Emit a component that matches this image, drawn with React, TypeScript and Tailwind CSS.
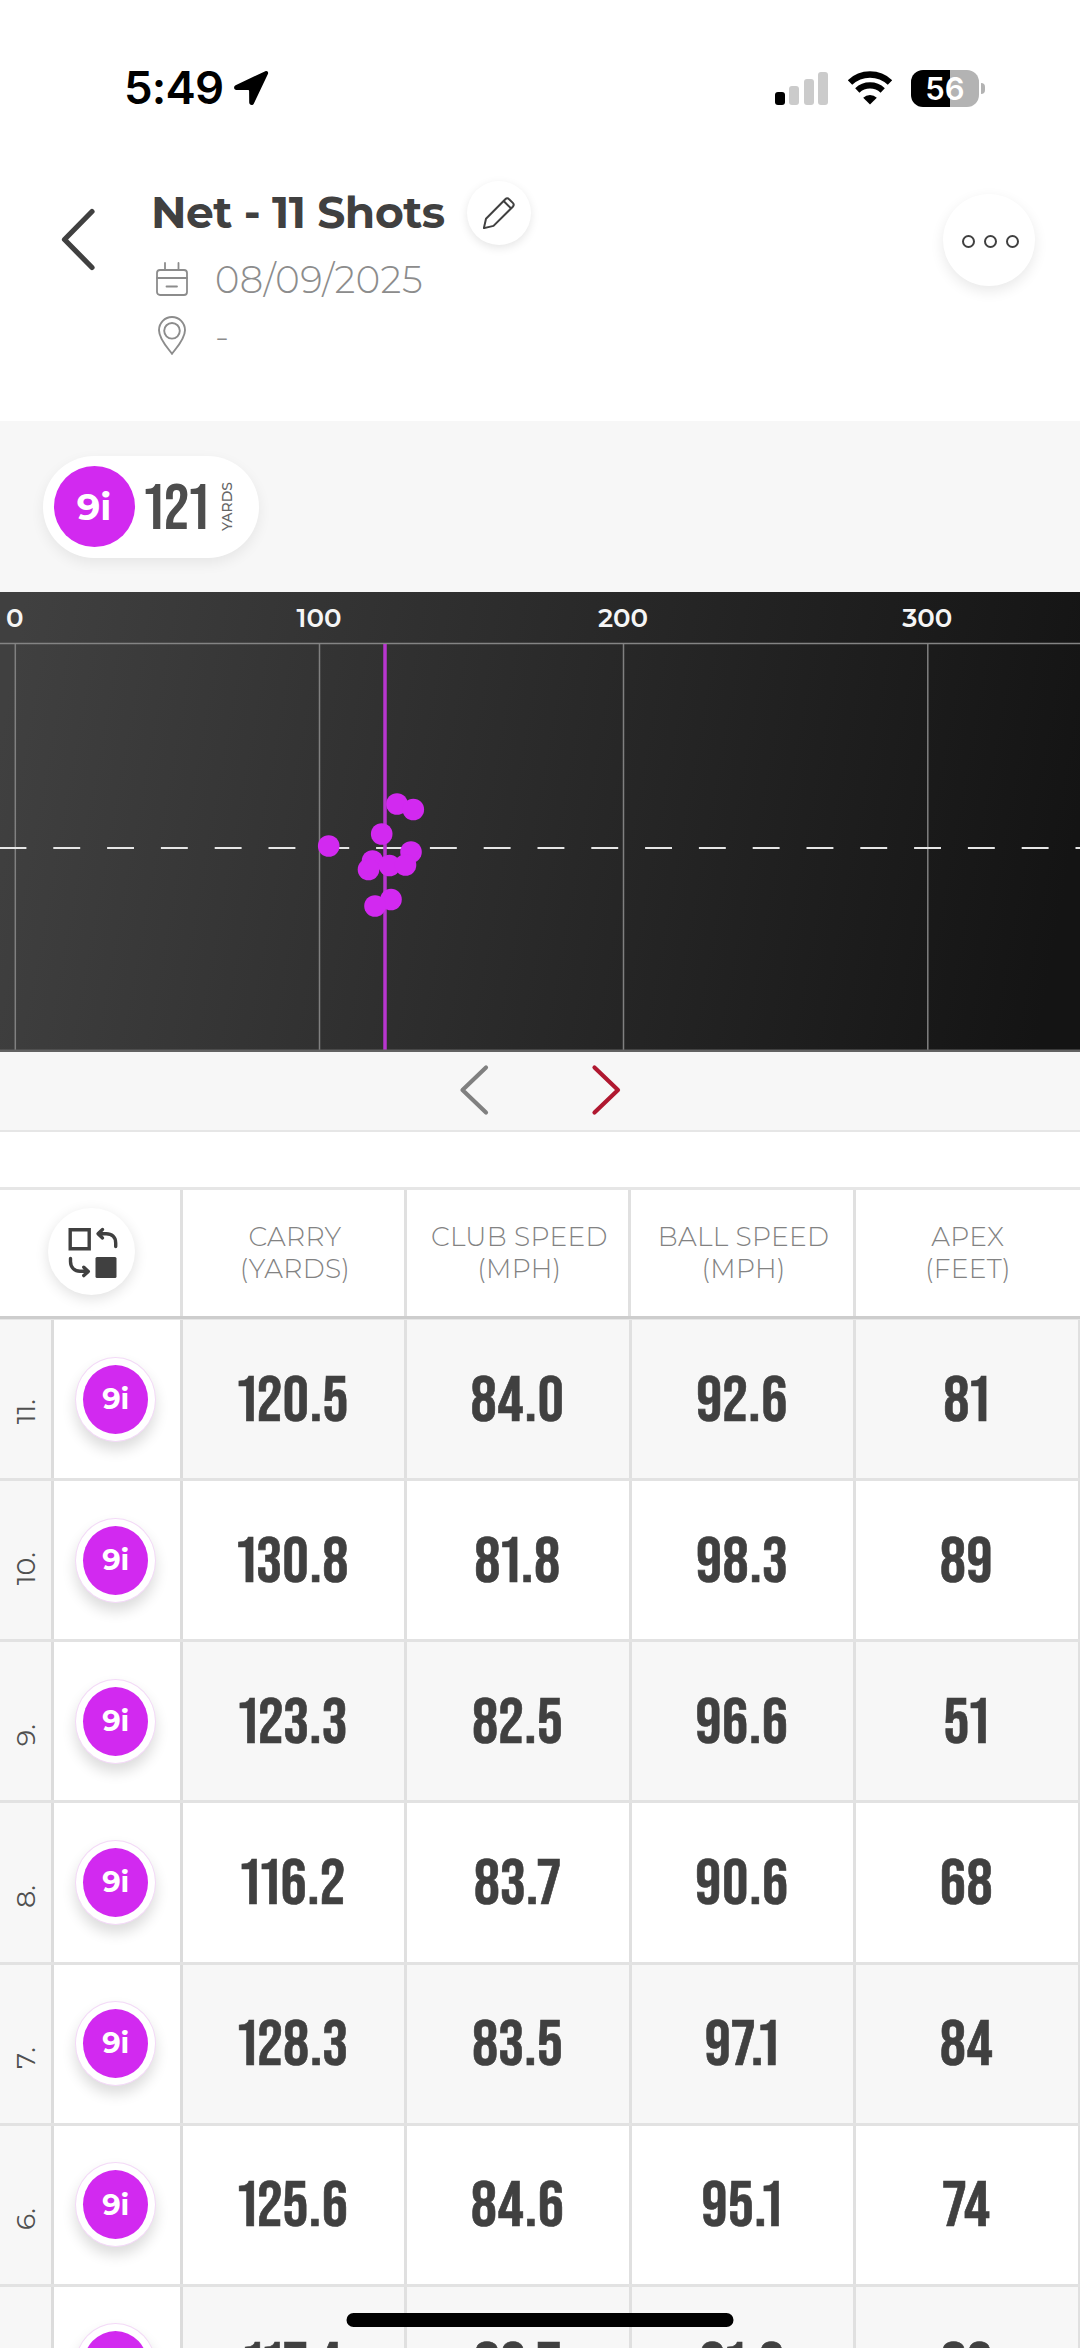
const PURPLE = "#d229f0";

type Shot = { n: number; values: string[] };

const columns = [
  ["CARRY", "(YARDS)"],
  ["CLUB SPEED", "(MPH)"],
  ["BALL SPEED", "(MPH)"],
  ["APEX", "(FEET)"],
];

const shots: Shot[] = [
  { n: 11, values: ["120.5", "84.0", "92.6", "81"] },
  { n: 10, values: ["130.8", "81.8", "98.3", "89"] },
  { n: 9, values: ["123.3", "82.5", "96.6", "51"] },
  { n: 8, values: ["116.2", "83.7", "90.6", "68"] },
  { n: 7, values: ["128.3", "83.5", "97.1", "84"] },
  { n: 6, values: ["125.6", "84.6", "95.1", "74"] },
  { n: 5, values: ["117.4", "82.7", "91.3", "83"] },
];

// Landing points, in chart pixels
const points = [
  [397, 212],
  [413.3, 217.5],
  [381.7, 242],
  [328.7, 254],
  [411, 260],
  [372.5, 269],
  [368.5, 277.5],
  [389.5, 273.5],
  [405.5, 273],
  [391, 307.5],
  [375, 314],
];

const gridLines = [
  [15.3, "0"],
  [319.5, "100"],
  [623.5, "200"],
  [927.8, "300"],
] as const;

function StatusBar() {
  return (
    <div className="flex h-[176px] shrink-0 items-center pl-[124px] pr-[95px] font-['Inter',sans-serif]">
      <span className="w-[99px] text-[45.5px] font-semibold leading-[48px] tracking-[-0.8px] text-black">5:49</span>
      <svg className="ml-[10px] h-9 w-9" viewBox="0 0 36 36" fill="#000">
        <path d="M32.3 1.200 2.600 15.300c-2.300 1.200-2 4.700.9 4.700l11.800.1c.5 0 .8.300.8.800l.1 11.600c0 2.800 3.600 3.400 4.700 1L34.900 4c.9-1.900-.700-3.700-2.600-2.800z" />
      </svg>
      <div className="ml-auto flex items-end gap-[4.500px]">
        <span className="h-[13px] w-[10px] rounded-[3px] bg-black" />
        <span className="h-[19px] w-[10px] rounded-[3px] bg-[#cbcbcb]" />
        <span className="h-[26px] w-[10px] rounded-[3px] bg-[#cbcbcb]" />
        <span className="h-[33px] w-[10px] rounded-[3px] bg-[#cbcbcb]" />
      </div>
      <svg className="ml-[19px] h-[34px] w-[46px]" viewBox="0 0 46 34">
        <path d="M3 11.500a29 29 0 0 1 40 0" fill="none" stroke="#000" strokeWidth="6.400" />
        <path d="M10.300 19.500a18.500 18.500 0 0 1 25.400 0" fill="none" stroke="#000" strokeWidth="6.200" />
        <path d="M23 33.500 16.200 26.700a10 10 0 0 1 13.600 0z" fill="#000" />
      </svg>
      <div className="ml-[18px] flex h-[37px] w-[68px] items-center justify-center rounded-[12px] bg-[linear-gradient(90deg,#000_57%,#b3b3b3_57%)]">
        <span className="text-[31px] font-semibold leading-[37px] text-white">56</span>
      </div>
      <span className="ml-[2px] h-[11px] w-1 rounded-r-full bg-[#b3b3b3]" />
    </div>
  );
}

function Header() {
  return (
    <div className="flex h-[245px] shrink-0 items-start">
      <svg className="ml-[60px] mt-[31px] h-16 w-9" viewBox="0 0 36 64" fill="none" stroke="#404040" strokeWidth="5.200" strokeLinecap="round" strokeLinejoin="round">
        <path d="M32 4.500 4.500 32.500 32 60.500" />
      </svg>
      <div className="ml-[54px]">
        <div className="flex h-[73px] items-center">
          <h1 className="w-[317px] whitespace-nowrap pb-[2px] pl-px text-[44px] font-bold leading-[56px] tracking-[-0.55px] text-[#404040]">Net - 11 Shots</h1>
          <span className="flex size-16 items-center justify-center rounded-full bg-white shadow-[0_3px_10px_rgba(0,0,0,0.1)]">
            <svg className="size-8" viewBox="0 0 32 32" fill="none" stroke="#404040" strokeWidth="2" strokeLinejoin="round">
              <path d="M.9 31.100 3 21.700 22.300 2.300c1.300-1.300 2.600-1.300 3.800-.1l3.700 3.700c1.200 1.200 1.200 2.500 0 3.800L10.500 28.900z" />
              <path d="m20.600 4 7.500 7.500" />
            </svg>
          </span>
        </div>
        <div className="flex h-14 items-center pt-[5px] text-[#8c8c8c]">
          <svg className="ml-[6px] mt-[-2px] h-[34px] w-8" viewBox="0 0 32 34" fill="none" stroke="#8c8c8c" strokeWidth="1.800" strokeLinecap="round">
            <rect x="1" y="8" width="30" height="25" rx="3" />
            <path d="M1 16h30M9 1v7M22.500 1v7M10.500 24.500h10.500" />
          </svg>
          <span className="ml-[27px] text-[37px] font-light leading-[44px] tracking-[0.5px]">08/09/2025</span>
        </div>
        <div className="flex h-14 items-center pt-1 text-[#8c8c8c]">
          <svg className="ml-[8px] h-[39px] w-7" viewBox="0 0 28 39" fill="none" stroke="#8c8c8c" strokeWidth="1.900">
            <path d="M14 37.800C11.500 34 1 23.500 1 14.200 1 6.800 6.800 1 14 1s13 5.800 13 13.200C27 23.500 16.500 34 14 37.800z" />
            <circle cx="14" cy="14.800" r="7.800" />
          </svg>
          <span className="ml-[29px] pt-[2px] text-[36.700px] font-light leading-[44px]">-</span>
        </div>
      </div>
      <div className="ml-auto mr-[45px] mt-[18px] flex size-[92px] items-center justify-center gap-[9px] rounded-full bg-white pl-[2px] pt-[3px] shadow-[0_5px_14px_rgba(0,0,0,0.09)]">
        <span className="size-[13px] rounded-full border-[2.500px] border-[#404040]" />
        <span className="size-[13px] rounded-full border-[2.500px] border-[#404040]" />
        <span className="size-[13px] rounded-full border-[2.500px] border-[#404040]" />
      </div>
    </div>
  );
}

function ClubSummary() {
  return (
    <div className="flex h-[171px] shrink-0 items-center bg-[#f7f7f7] pl-[43px]">
      <div className="flex h-[102px] w-[216px] items-center rounded-full bg-white pl-[10.500px] shadow-[0_5px_14px_rgba(0,0,0,0.07)]">
        <span className="flex size-[81px] shrink-0 items-center justify-center rounded-full bg-[#d229f0] text-[37px] font-bold text-white">9i</span>
        <span className="ml-[10px] w-[72px] shrink-0 font-['Bebas_Neue',sans-serif] text-[65px] leading-[65px] tracking-[1px] text-[#4d4d4d] proportional-nums">
          <span className="relative top-[4px]">121</span>
        </span>
        <span className="rotate-180 text-[14px] font-medium leading-[20px] text-[#666] [writing-mode:vertical-rl]">YARDS</span>
      </div>
    </div>
  );
}

function DispersionChart() {
  return (
    <svg className="block h-[460px] w-[1080px] shrink-0" viewBox="0 0 1080 460">
      <defs>
        <linearGradient id="turf" gradientUnits="userSpaceOnUse" x1="0" y1="140" x2="1060" y2="330">
          <stop offset="0" stopColor="#404040" />
          <stop offset="1" stopColor="#141414" />
        </linearGradient>
      </defs>
      <rect width="1080" height="460" fill="url(#turf)" />
      <path d="M0 51.500H1080" stroke="#848484" strokeWidth="1.500" />
      {gridLines.map(([x, label]) => (
        <g key={label}>
          <path d={`M${x} 52V458`} stroke="#808080" strokeWidth="1.500" />
          <text x={x - 0.5} y="35" textAnchor="middle" className="fill-[#f5f5f5] text-[26px] font-semibold">
            {label}
          </text>
        </g>
      ))}
      <path d="M-.5 256H1080" stroke="#e6e6e6" strokeWidth="2" strokeDasharray="26.900 26.900" />
      <path d="M385 52V458" stroke="#b836cf" strokeWidth="3.500" />
      {points.map(([x, y]) => (
        <circle key={`${x}-${y}`} cx={x} cy={y} r="10.800" fill={PURPLE} />
      ))}
      <rect y="457.500" width="1080" height="2.500" fill="#626262" />
    </svg>
  );
}

function Pager() {
  return (
    <div className="flex h-20 shrink-0 justify-center gap-[101px] border-b-[2.500px] border-[#e6e6e6] bg-[#f7f7f7] pt-3">
      <svg className="h-[52px] w-[31px]" viewBox="0 0 31 52" fill="none" stroke="#808080" strokeWidth="4.200" strokeLinecap="round" strokeLinejoin="round">
        <path d="M27 3.500 3.500 26 27 48.500" />
      </svg>
      <svg className="h-[52px] w-[31px]" viewBox="0 0 31 52" fill="none" stroke="#b01830" strokeWidth="4.200" strokeLinecap="round" strokeLinejoin="round">
        <path d="M3.500 3.500 27 26 3.500 48.500" />
      </svg>
    </div>
  );
}

function TableHeader() {
  return (
    <div className="flex h-[132px] w-[1080px] shrink-0 border-b-[3px] border-t-[3px] border-b-[#cdcdcd] border-t-[#e6e6e6]">
      <div className="w-[183px] border-r-[3px] border-[#e0e0e0] pl-12 pt-[18px]">
        <span className="flex size-[87px] items-center justify-center rounded-full bg-white shadow-[0_4px_14px_rgba(0,0,0,0.12)]">
          <svg className="ml-[2px] size-[52px]" viewBox="0 0 52 52" fill="none" stroke="#404040" strokeWidth="3.400" strokeLinecap="round" strokeLinejoin="round">
            <path d="M3.200 3.700h19v19h-19z" strokeLinejoin="miter" />
            <rect x="28.500" y="31" width="21" height="21" rx="1.500" fill="#404040" stroke="none" />
            <path d="M48.700 20.500v-3.500c0-6-4-9.300-9.500-9.300H31.500M35.500 3.500 31 7.700l4.500 4.200" />
            <path d="M3.500 32.500v3c0 6 4 9.800 9.500 9.800h7.500M16.800 41.200 21.300 45.400l-4.500 4.200" />
          </svg>
        </span>
      </div>
      {columns.map(([name, unit]) => (
        <div key={name} className="flex w-[224.500px] flex-col items-center justify-center border-r-[3px] border-[#e0e0e0] pl-[3px] text-[26.500px] font-light leading-8 tracking-[0.3px] text-[#828282] last:border-r-0 last:pr-[3px]">
          <span>{name}</span>
          <span>{unit}</span>
        </div>
      ))}
    </div>
  );
}

function ShotRow({ shot, shaded }: { shot: Shot; shaded: boolean }) {
  return (
    <div className="flex h-[161.150px] w-[1080.500px] shrink-0 border-b-[3px] border-[#e2e2e2]">
      <div className="flex w-[54px] items-end border-r-[3px] border-[#dcdcdc] bg-[#f7f7f7] pb-[54px] pl-[10px]">
        <span className="rotate-180 text-[27px] font-normal leading-8 text-[#505050] [writing-mode:vertical-rl]">{shot.n}.</span>
      </div>
      <div className="flex w-[128.500px] items-center justify-center border-r-[3px] border-[#dcdcdc] bg-white pr-[2px]">
        <span className="flex h-[85px] w-[81px] items-center justify-center rounded-[50%] border border-[#f3d9f7] bg-white shadow-[0_8px_14px_rgba(0,0,0,0.14)]">
          <span className="flex h-[69px] w-[65px] items-center justify-center rounded-[50%] bg-[#d229f0] pb-px text-[29px] font-bold text-white">9i</span>
        </span>
      </div>
      {shot.values.map((value, i) => (
        <div
          key={i}
          className={`flex w-[224.500px] items-center justify-center border-r-[3px] border-[#e0e0e0] font-['Bebas_Neue',sans-serif] text-[65px] leading-[65px] tracking-[1px] text-[#404040] proportional-nums [-webkit-text-stroke:0.6px_#404040] ${shaded ? "bg-[#f7f7f7]" : "bg-white"}`}
        >
          <span className="pt-[6px]">{value}</span>
        </div>
      ))}
    </div>
  );
}

export default function App() {
  return (
    <div className="relative flex h-[2348px] w-[1080px] flex-col overflow-hidden bg-white font-['Montserrat','Inter',sans-serif]">
      <StatusBar />
      <Header />
      <ClubSummary />
      <DispersionChart />
      <Pager />
      <div className="h-[55px] shrink-0" />
      <TableHeader />
      <div className="flex flex-col border-t border-[#e6e6e6]">
        {shots.map((shot, i) => (
          <ShotRow key={shot.n} shot={shot} shaded={i % 2 === 0} />
        ))}
      </div>
      <div className="absolute bottom-[21px] left-1/2 h-[14px] w-[387px] -translate-x-1/2 rounded-full bg-black" />
    </div>
  );
}
